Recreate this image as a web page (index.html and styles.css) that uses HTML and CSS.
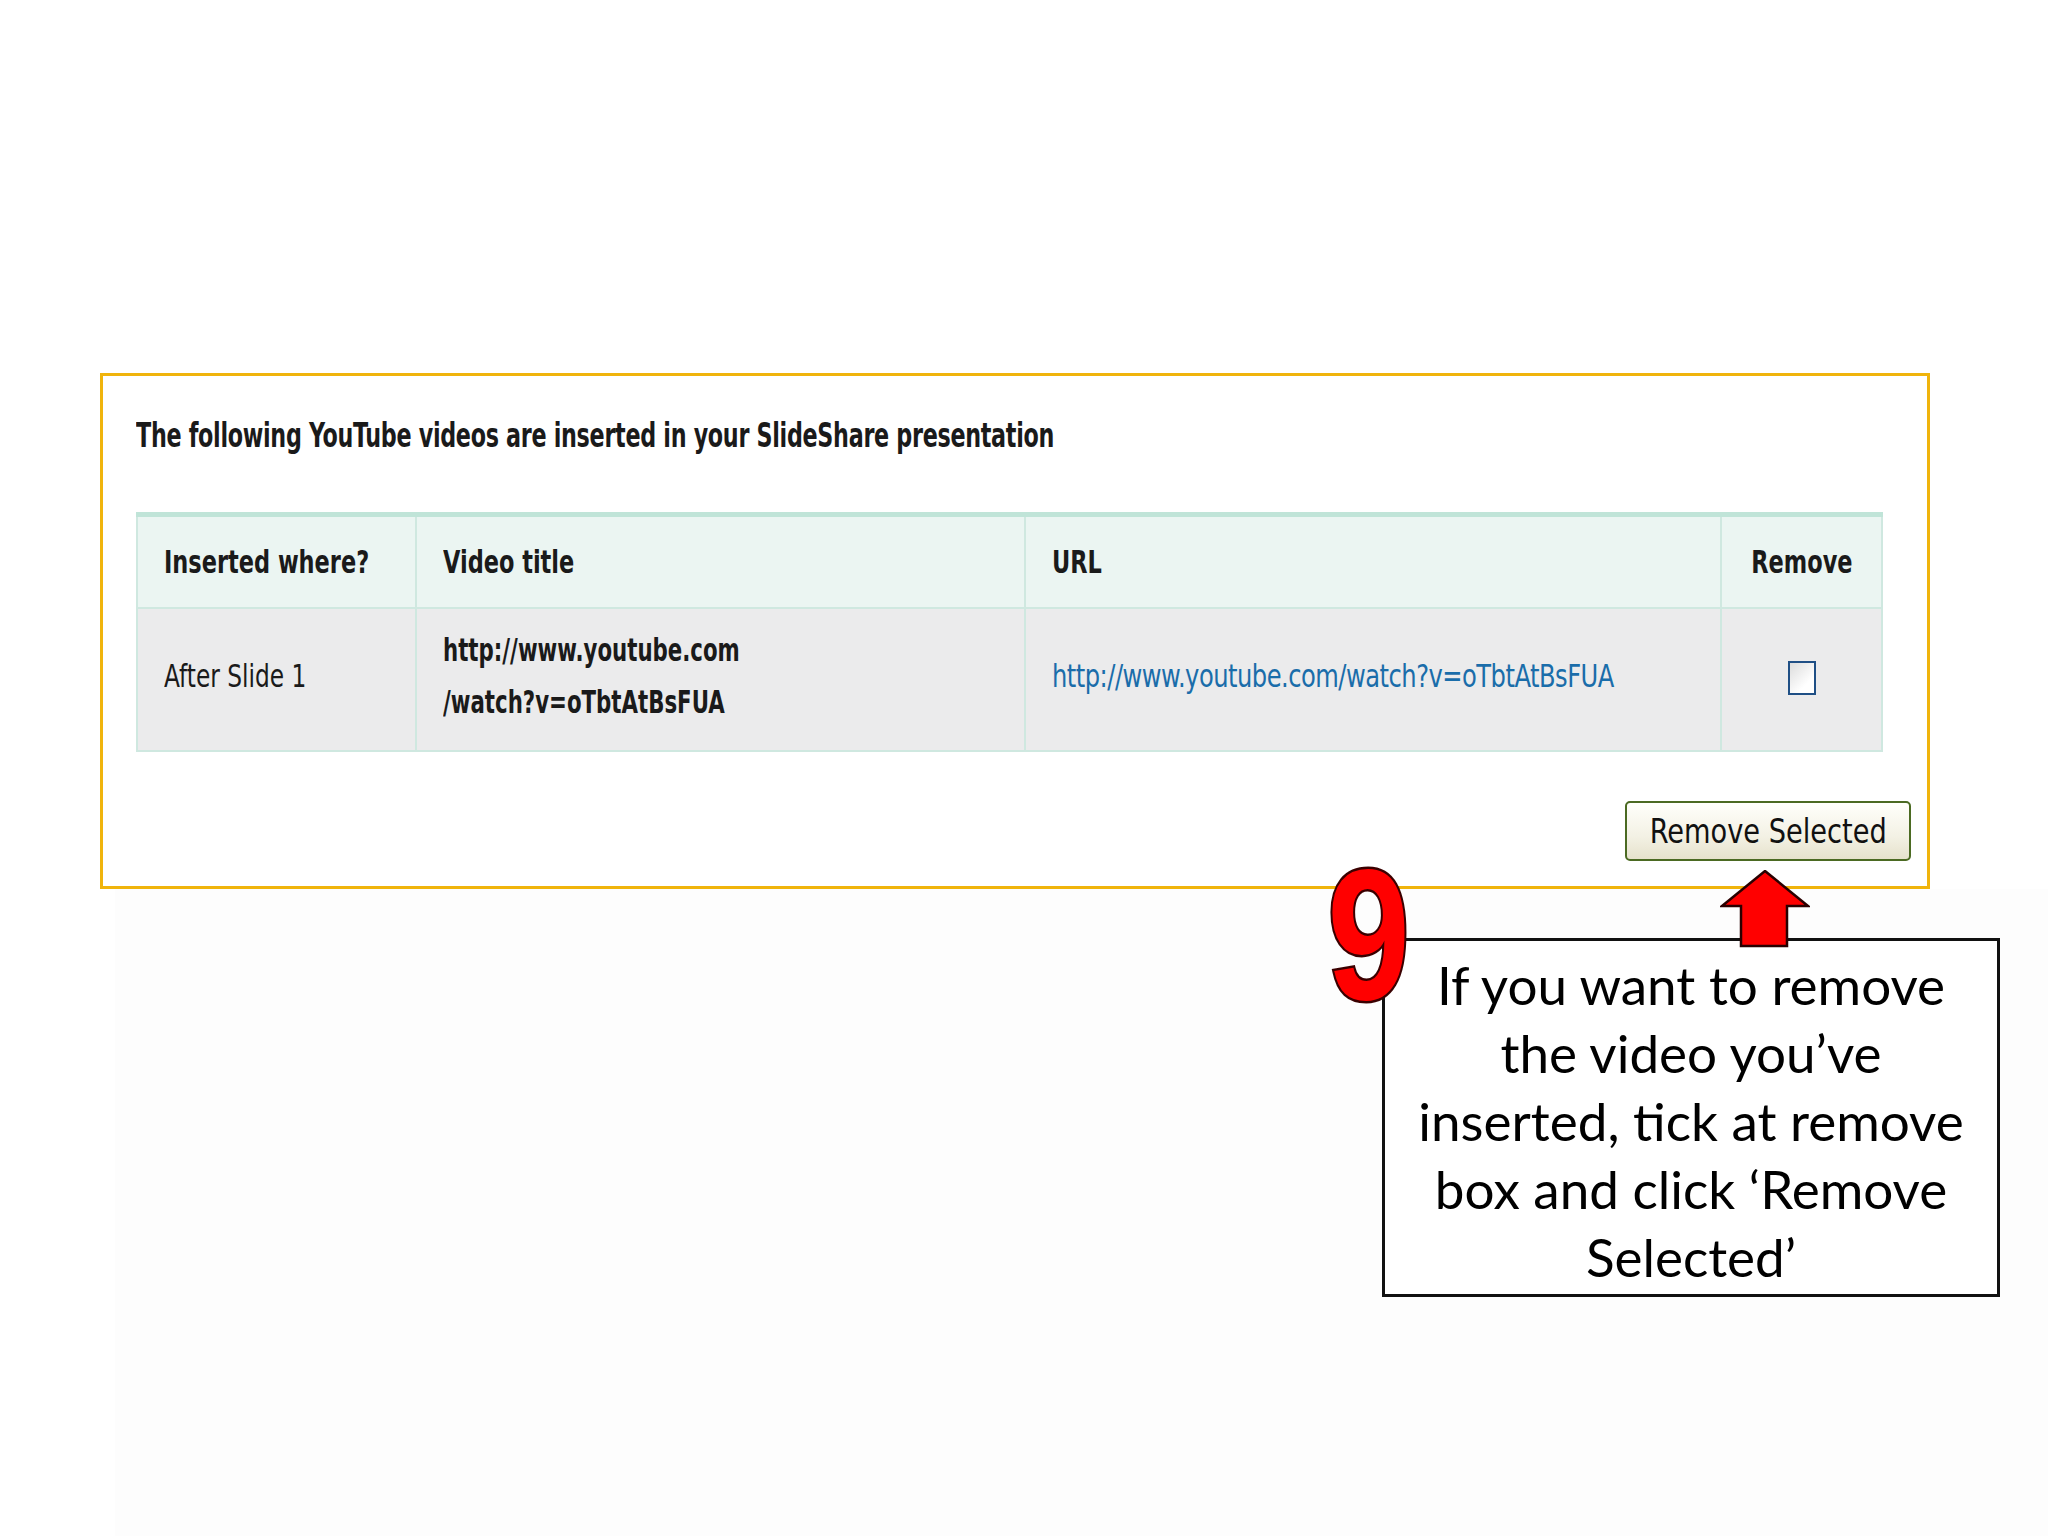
FILE: index.html
```html
<!DOCTYPE html>
<html lang="en">
<head>
  <meta charset="UTF-8">
  <title>Remove YouTube videos</title>
  <link rel="stylesheet" href="styles.css">
</head>
<body>
  <section class="panel">
    <p class="intro"><span>The following YouTube videos are inserted in your SlideShare presentation</span></p>

    <table class="videos">
      <colgroup>
        <col class="col-where">
        <col class="col-title">
        <col class="col-url">
        <col class="col-remove">
      </colgroup>
      <tr class="head">
        <th><span>Inserted where?</span></th>
        <th><span>Video title</span></th>
        <th><span>URL</span></th>
        <th class="center"><span>Remove</span></th>
      </tr>
      <tr class="row">
        <td class="where"><span>After Slide 1</span></td>
        <td class="title"><span>http://www.youtube.com<br>/watch?v=oTbtAtBsFUA</span></td>
        <td class="link"><a class="url" href="#">http://www.youtube.com/watch?v=oTbtAtBsFUA</a></td>
        <td class="center"><span class="check"></span></td>
      </tr>
    </table>

    <div class="actions">
      <button class="remove"><span>Remove Selected</span></button>
    </div>
  </section>

  <div class="below">
    <div class="callout">
      <span class="step">9</span>
      <svg class="arrow" width="90" height="78" viewBox="0 0 90 78">
        <path d="M45 1 L88 36 L67 36 L67 76 L21 76 L21 36 L2 36 Z" fill="#ff0000" stroke="#2a0000" stroke-width="2.5"/>
      </svg>
      <p>If you want to remove<br>the video you’ve<br>inserted, tick at remove<br>box and click ‘Remove<br>Selected’</p>
    </div>
  </div>
</body>
</html>
```

FILE: styles.css
```css
body {
  margin: 0;
  background: #ffffff;
  font-family: "DejaVu Sans Condensed", "Liberation Sans", sans-serif;
  color: #1a1a1a;
}
/* the screenshot text is a squeezed pixel font, so spans get narrowed */
.intro span,
.videos span,
.url,
.remove span {
  display: inline-block;
  white-space: nowrap;
  transform-origin: left center;
}
.panel {
  box-sizing: border-box;
  width: 1830px;
  height: 516px;
  margin: 373px 0 0 100px;
  padding: 40px 16px 0 33px;
  border: 3px solid #f0b40c;
  background: #ffffff;
}
.intro {
  margin: 0;
  height: 40px;
  line-height: 40px;
  font-size: 33px;
  font-weight: bold;
  letter-spacing: -0.4px;
}
.intro span {
  transform: scaleX(0.75);
}
.videos {
  width: 1745px;
  margin-top: 56px;
  border-collapse: collapse;
  table-layout: fixed;
  border-top: 5px solid #c0e4d8;
}
.col-where { width: 279px; }
.col-title { width: 609px; }
.col-url { width: 696px; }
.col-remove { width: 161px; }
.videos th,
.videos td {
  border: 2px solid #cfe8e0;
  padding: 0 26px;
  text-align: left;
  font-size: 32px;
}
.head th {
  height: 90px;
  background: #ebf5f2;
  font-weight: bold;
}
.head th span {
  transform: scaleX(0.78);
}
.row td {
  height: 133px;
  padding-bottom: 8px;
  background: #ebebec;
}
.videos .center {
  text-align: center;
  padding-left: 0;
  padding-right: 0;
}
.videos .center span {
  transform-origin: center;
}
.where {
  font-weight: normal;
}
.where span {
  transform: scaleX(0.81);
}
.title {
  font-weight: bold;
  line-height: 52px;
}
.title span {
  transform: scaleX(0.74);
}
.link {
  white-space: nowrap;
}
.url {
  color: #1a6daa;
  text-decoration: none;
  letter-spacing: -0.6px;
  transform: scaleX(0.84);
}
.check {
  box-sizing: border-box;
  width: 28px;
  height: 34px;
  border: 2px solid #1f4f85;
  background: linear-gradient(135deg, #dcdcdc, #ffffff 70%);
  vertical-align: middle;
}
.actions {
  display: flex;
  justify-content: flex-end;
  margin-top: 49px;
}
.remove {
  box-sizing: border-box;
  width: 286px;
  height: 60px;
  border: 2px solid #4b6a22;
  border-radius: 5px;
  background: linear-gradient(#fffffb, #f3f1e4 60%, #e6e2cc);
  font-family: inherit;
  font-size: 34px;
  color: #111111;
  padding: 0;
}
.remove span {
  transform: scaleX(0.89);
  transform-origin: center;
}
.below {
  box-sizing: border-box;
  min-height: 647px;
  margin-left: 115px;
  padding-top: 49px;
  background: #fdfdfd;
}
.callout {
  position: relative;
  box-sizing: border-box;
  width: 618px;
  height: 359px;
  margin-left: 1267px;
  border: 3px solid #111111;
  background: #ffffff;
}
.callout p {
  margin: 10px 0 0;
  font-family: Lato, "Open Sans", sans-serif;
  font-size: 53px;
  line-height: 68px;
  text-align: center;
  color: #000000;
}
.step {
  position: absolute;
  left: -68px;
  top: -99px;
  font-family: "Liberation Sans", sans-serif;
  font-weight: bold;
  font-size: 186px;
  line-height: 1;
  color: #ff0000;
  -webkit-text-stroke: 5px #3a0000;
  paint-order: stroke fill;
  transform: scaleX(0.8);
}
.arrow {
  position: absolute;
  left: 335px;
  top: -71px;
}
```
